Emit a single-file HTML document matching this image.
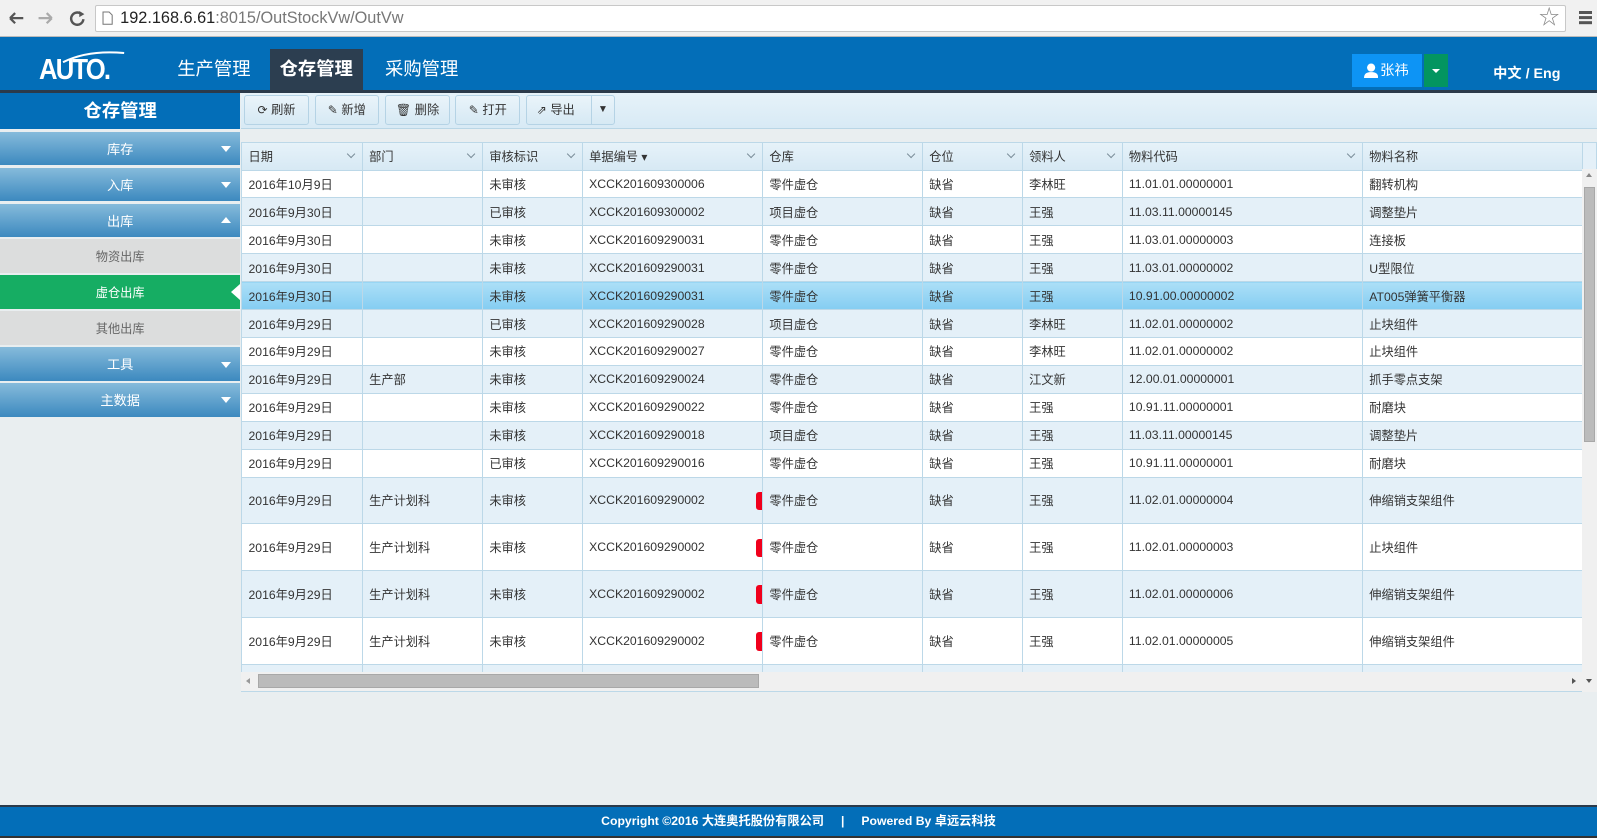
<!DOCTYPE html>
<html><head><meta charset="utf-8"><style>
*{box-sizing:border-box;margin:0;padding:0}
html,body{width:1597px;height:838px;overflow:hidden;background:#e9eef0}
#w{zoom:1.0185;width:1568px;height:823px;position:relative;font-family:"Liberation Sans","Noto Sans CJK SC",sans-serif;font-size:12px;color:#333}
.a{position:absolute}
#chrome{left:0;top:0;width:1568px;height:36px;background:#f1f1f1;border-bottom:1px solid #bbb}
#addr{left:93px;top:5px;width:1445px;height:26px;background:#fff;border:1px solid #c8c8c8;border-radius:2px;font-size:16px;line-height:24px;padding-left:24px;color:#222}
#hdr{left:0;top:36px;width:1568px;height:52px;background:#036eb8}
.nav{top:0;height:52px;line-height:62px;font-size:18px;color:#fff;padding:0 11px;white-space:nowrap}
#strip{left:0;top:88px;width:1568px;height:3px;background:#2b3a4a}
#side{left:0;top:91px;width:236px}
.st{height:36px;background:#036eb8;color:#fff;font-weight:bold;font-size:18px;text-align:center;line-height:36px}
.mi{margin-top:2.3px;height:33px;line-height:35px;text-align:center;color:#fff;font-size:13px;background:linear-gradient(#86bbdb,#3c89bf);position:relative}
.mi i{position:absolute;right:9px;top:14px;border:5px solid transparent;border-top:6px solid #fff;border-bottom:0}
.mi i.up{border-top:0;border-bottom:6px solid #fff;top:13px}
.sub{margin-top:2.3px;height:33px;line-height:36px;text-align:center;color:#666;font-size:12px;background:#dcdddd;position:relative}
.sub.on{background:#16ad63;color:#fff}
.sub.on:after{content:"";position:absolute;right:0;top:8px;border:8px solid transparent;border-right:9px solid #fff;border-left:0}
#tb{left:237px;top:91px;width:1331px;height:36px;background:linear-gradient(#e6f2f9,#d8eaf5);border-bottom:1px solid #b9d6e6}
.btn{top:2px;height:30px;border:1px solid #b5d3e5;border-radius:3px;background:linear-gradient(#eaf4fa,#d6e9f4);line-height:28px;font-size:12px;color:#333;text-align:center}
#grid{left:237px;top:139px;width:1331px;height:540px;border:1px solid #bcd8e8;background:#e4f0f8;overflow:hidden}
table{border-collapse:collapse;table-layout:fixed;position:absolute;left:0;top:0}
td,th{border-right:1px solid #bcd8e8;border-bottom:1px solid #bcd8e8;padding-left:6px;font-weight:normal;text-align:left;white-space:nowrap;overflow:hidden;position:relative}
th{height:27px;background:linear-gradient(#e6f2f9,#d7e9f4);color:#333}
th b{position:absolute;right:8px;top:8px;width:6px;height:6px;border-right:1px solid #7a8d99;border-bottom:1px solid #7a8d99;transform:rotate(45deg)}
td{height:27.4px;background:#fff}
tr.e td{background:#e4f0f8}
tr.s td{background:linear-gradient(#acdff7,#84cdf2)}
tr.t td{height:46px}
.r{position:absolute;right:0;top:14px;width:6px;height:18px;background:#f0001c;border-radius:3px 0 0 3px}
#vs{left:1553px;top:166px;width:15px;height:513px;background:#f0f0f0}
#hs{left:237px;top:660px;width:1316px;height:18px;background:#f0f0f0}
#ft{left:0;top:790px;width:1568px;height:33px;background:#036eb8;border-top:2px solid #2b3a4a;border-bottom:2px solid #333;color:#fff;font-weight:bold;font-size:12px;text-align:center;line-height:28px}
</style></head><body><div id="w">
<div id="chrome" class="a">
<svg class="a" style="left:8px;top:10px" width="80" height="16"><path d="M2 8h13M2 8l5-5M2 8l5 5" stroke="#555" stroke-width="2.2" fill="none"/><path d="M30 8h13M43 8l-5-5M43 8l-5 5" stroke="#aaa" stroke-width="2.2" fill="none"/><path d="M72 4a6 6 0 1 0 2 5" stroke="#555" stroke-width="2.4" fill="none"/><path d="M70 1l5 3-5 3z" fill="#555"/></svg>
<div id="addr" class="a"><svg class="a" style="left:6px;top:5px" width="11" height="14"><path d="M1 1h6l3 3v9H1z" fill="#fff" stroke="#777"/></svg>192.168.6.61<span style="color:#777">:8015/OutStockVw/OutVw</span><span class="a" style="right:6px;top:0;color:#888;font-size:20px">☆</span></div>
<div class="a" style="left:1550px;top:11px;width:13px;height:3px;background:#555;box-shadow:0 5px #555,0 10px #555"></div>
</div>
<div id="hdr" class="a">
<svg class="a" style="left:60px;top:14px" width="70" height="12"><path d="M2 11C20 2 40 0 62 2" stroke="#fff" stroke-width="2" fill="none"/></svg>
<div class="a" style="left:38px;top:18px;color:#fff;font-family:'Liberation Sans',sans-serif;font-size:28px;font-weight:bold;letter-spacing:-2px;line-height:30px;transform:scaleX(0.9);transform-origin:left">AUTO.</div>
<div class="a nav" style="left:163px">生产管理</div>
<div class="a nav" style="left:265px;top:12px;height:40px;line-height:40px;background:#2c3e50;font-weight:bold;width:91px;padding:0;text-align:center">仓存管理</div>
<div class="a nav" style="left:367px">采购管理</div>
<div class="a" style="left:1327px;top:17px;width:69px;height:32px;background:#0d94f5;color:#fff;font-size:14px;line-height:34px;padding-left:28px">张祎<svg class="a" style="left:12px;top:9px" width="14" height="15"><circle cx="7" cy="4.5" r="4" fill="#fff"/><path d="M0 15c0-5 3-6 7-6s7 1 7 6z" fill="#fff"/></svg></div>
<div class="a" style="left:1398px;top:17px;width:24px;height:32px;background:#039560"><i class="a" style="left:8px;top:15px;border:4px solid transparent;border-top:4px solid #fff;border-bottom:0"></i></div>
<div class="a" style="left:1466px;top:25px;color:#fff;font-weight:bold;font-size:14px">中文 / Eng</div>
</div>
<div id="strip" class="a"></div>
<div id="side" class="a">
<div class="st">仓存管理</div>
<div class="mi">库存<i></i></div>
<div class="mi">入库<i></i></div>
<div class="mi">出库<i class="up"></i></div>
<div class="sub">物资出库</div>
<div class="sub on">虚仓出库</div>
<div class="sub">其他出库</div>
<div class="mi">工具<i></i></div>
<div class="mi">主数据<i></i></div>
</div>
<div id="tb" class="a">
<div class="a btn" style="left:3px;width:63px">⟳ 刷新</div>
<div class="a btn" style="left:72px;width:63px">✎ 新增</div>
<div class="a btn" style="left:141px;width:64px">🗑 删除</div>
<div class="a btn" style="left:210px;width:64px">✎ 打开</div>
<div class="a btn" style="left:279px;width:88px;text-align:left;padding-left:10px">⇗ 导出<span class="a" style="left:63px;top:0;width:1px;height:28px;background:#b5d3e5"></span><span class="a" style="left:70px;font-size:10px">▼</span></div>
</div>
<div id="grid" class="a">
<table>
<colgroup><col style="width:118px"><col style="width:118px"><col style="width:98px"><col style="width:177px"><col style="width:157px"><col style="width:98px"><col style="width:98px"><col style="width:236px"><col style="width:216px"></colgroup>
<tr><th>日期<b></b></th><th>部门<b></b></th><th>审核标识<b></b></th><th>单据编号 ▾<b></b></th><th>仓库<b></b></th><th>仓位<b></b></th><th>领料人<b></b></th><th>物料代码<b></b></th><th>物料名称</th></tr>
<tr><td>2016年10月9日</td><td></td><td>未审核</td><td>XCCK201609300006</td><td>零件虚仓</td><td>缺省</td><td>李林旺</td><td>11.01.01.00000001</td><td>翻转机构</td></tr>
<tr class="e"><td>2016年9月30日</td><td></td><td>已审核</td><td>XCCK201609300002</td><td>项目虚仓</td><td>缺省</td><td>王强</td><td>11.03.11.00000145</td><td>调整垫片</td></tr>
<tr><td>2016年9月30日</td><td></td><td>未审核</td><td>XCCK201609290031</td><td>零件虚仓</td><td>缺省</td><td>王强</td><td>11.03.01.00000003</td><td>连接板</td></tr>
<tr class="e"><td>2016年9月30日</td><td></td><td>未审核</td><td>XCCK201609290031</td><td>零件虚仓</td><td>缺省</td><td>王强</td><td>11.03.01.00000002</td><td>U型限位</td></tr>
<tr class="s"><td>2016年9月30日</td><td></td><td>未审核</td><td>XCCK201609290031</td><td>零件虚仓</td><td>缺省</td><td>王强</td><td>10.91.00.00000002</td><td>AT005弹簧平衡器</td></tr>
<tr class="e"><td>2016年9月29日</td><td></td><td>已审核</td><td>XCCK201609290028</td><td>项目虚仓</td><td>缺省</td><td>李林旺</td><td>11.02.01.00000002</td><td>止块组件</td></tr>
<tr><td>2016年9月29日</td><td></td><td>未审核</td><td>XCCK201609290027</td><td>零件虚仓</td><td>缺省</td><td>李林旺</td><td>11.02.01.00000002</td><td>止块组件</td></tr>
<tr class="e"><td>2016年9月29日</td><td>生产部</td><td>未审核</td><td>XCCK201609290024</td><td>零件虚仓</td><td>缺省</td><td>江文新</td><td>12.00.01.00000001</td><td>抓手零点支架</td></tr>
<tr><td>2016年9月29日</td><td></td><td>未审核</td><td>XCCK201609290022</td><td>零件虚仓</td><td>缺省</td><td>王强</td><td>10.91.11.00000001</td><td>耐磨块</td></tr>
<tr class="e"><td>2016年9月29日</td><td></td><td>未审核</td><td>XCCK201609290018</td><td>项目虚仓</td><td>缺省</td><td>王强</td><td>11.03.11.00000145</td><td>调整垫片</td></tr>
<tr><td>2016年9月29日</td><td></td><td>已审核</td><td>XCCK201609290016</td><td>零件虚仓</td><td>缺省</td><td>王强</td><td>10.91.11.00000001</td><td>耐磨块</td></tr>
<tr class="e t"><td>2016年9月29日</td><td>生产计划科</td><td>未审核</td><td>XCCK201609290002<span class="r"></span></td><td>零件虚仓</td><td>缺省</td><td>王强</td><td>11.02.01.00000004</td><td>伸缩销支架组件</td></tr>
<tr class="t"><td>2016年9月29日</td><td>生产计划科</td><td>未审核</td><td>XCCK201609290002<span class="r"></span></td><td>零件虚仓</td><td>缺省</td><td>王强</td><td>11.02.01.00000003</td><td>止块组件</td></tr>
<tr class="e t"><td>2016年9月29日</td><td>生产计划科</td><td>未审核</td><td>XCCK201609290002<span class="r"></span></td><td>零件虚仓</td><td>缺省</td><td>王强</td><td>11.02.01.00000006</td><td>伸缩销支架组件</td></tr>
<tr class="t"><td>2016年9月29日</td><td>生产计划科</td><td>未审核</td><td>XCCK201609290002<span class="r"></span></td><td>零件虚仓</td><td>缺省</td><td>王强</td><td>11.02.01.00000005</td><td>伸缩销支架组件</td></tr>
<tr class="e t"><td></td><td></td><td></td><td></td><td></td><td></td><td></td><td></td><td></td></tr>
</table>
</div>
<div id="vs" class="a"><div class="a" style="left:2px;top:18px;width:11px;height:250px;background:#bbb;border:1px solid #a8a8a8"></div><span class="a" style="left:4px;top:4px;border:3px solid transparent;border-bottom:4px solid #888;border-top:0"></span><span class="a" style="left:4px;top:501px;border:3px solid transparent;border-top:4px solid #555;border-bottom:0"></span></div>
<div id="hs" class="a"><div class="a" style="left:16px;top:2px;width:492px;height:14px;background:#bbb;border:1px solid #a8a8a8"></div><span class="a" style="left:5px;top:6px;border:3px solid transparent;border-right:4px solid #999;border-left:0"></span><span class="a" style="right:6px;top:6px;border:3px solid transparent;border-left:4px solid #555;border-right:0"></span></div>
<div id="ft" class="a">Copyright ©2016 大连奥托股份有限公司 &nbsp; &nbsp; | &nbsp; &nbsp; Powered By 卓远云科技</div>
</div></body></html>
